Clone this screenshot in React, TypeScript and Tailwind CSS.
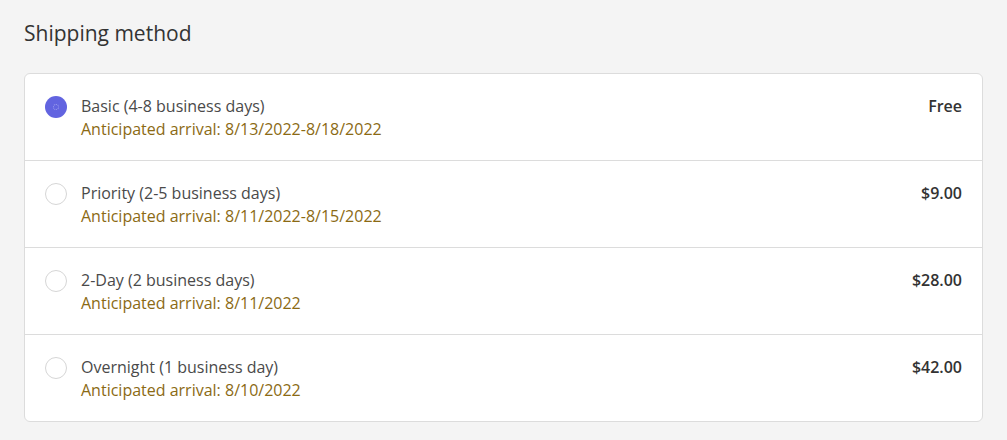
import { useState } from 'react';

interface ShippingOption {
  id: string;
  name: string;
  arrival: string;
  price: string;
}

const options: ShippingOption[] = [
  { id: 'basic', name: 'Basic (4-8 business days)', arrival: 'Anticipated arrival: 8/13/2022-8/18/2022', price: 'Free' },
  { id: 'priority', name: 'Priority (2-5 business days)', arrival: 'Anticipated arrival: 8/11/2022-8/15/2022', price: '$9.00' },
  { id: 'twoday', name: '2-Day (2 business days)', arrival: 'Anticipated arrival: 8/11/2022', price: '$28.00' },
  { id: 'overnight', name: 'Overnight (1 business day)', arrival: 'Anticipated arrival: 8/10/2022', price: '$42.00' },
];

export default function App() {
  const [selected, setSelected] = useState('basic');

  return (
    <div className="min-h-screen bg-[#f4f4f4] px-6 pt-[18px] pb-5 font-['Open_Sans','Noto_Sans',sans-serif]">
      <h1 className="text-[21px] leading-[30px] text-[#333] mb-[25px]">Shipping method</h1>

      <div className="bg-white border border-[#dcdcdc] rounded-md">
        {options.map((opt, i) => (
          <label
            key={opt.id}
            onClick={() => setSelected(opt.id)}
            className={`flex items-start justify-between px-5 pt-[21px] cursor-pointer ${i > 0 ? 'h-[87px] border-t border-[#dcdcdc]' : 'h-[86px]'}`}
          >
            <div className="flex items-start">
              <span
                className={`mt-[1px] w-[22px] h-[22px] rounded-full flex items-center justify-center shrink-0 ${
                  selected === opt.id ? 'bg-[#6264e0]' : 'border border-[#d6d6d6] bg-white'
                }`}
              >
                {selected === opt.id && (
                  <span className="w-[6px] h-[6px] rounded-full border border-dotted border-white/40" />
                )}
              </span>
              <div className="ml-[14px]">
                <div className="text-[16px] leading-[23px] text-[#4a4a4a]">{opt.name}</div>
                <div className="text-[16px] leading-[23px] text-[#8b6a14]">{opt.arrival}</div>
              </div>
            </div>
            <div className="text-[16px] leading-[23px] font-semibold text-[#333]">{opt.price}</div>
          </label>
        ))}
      </div>
    </div>
  );
}
